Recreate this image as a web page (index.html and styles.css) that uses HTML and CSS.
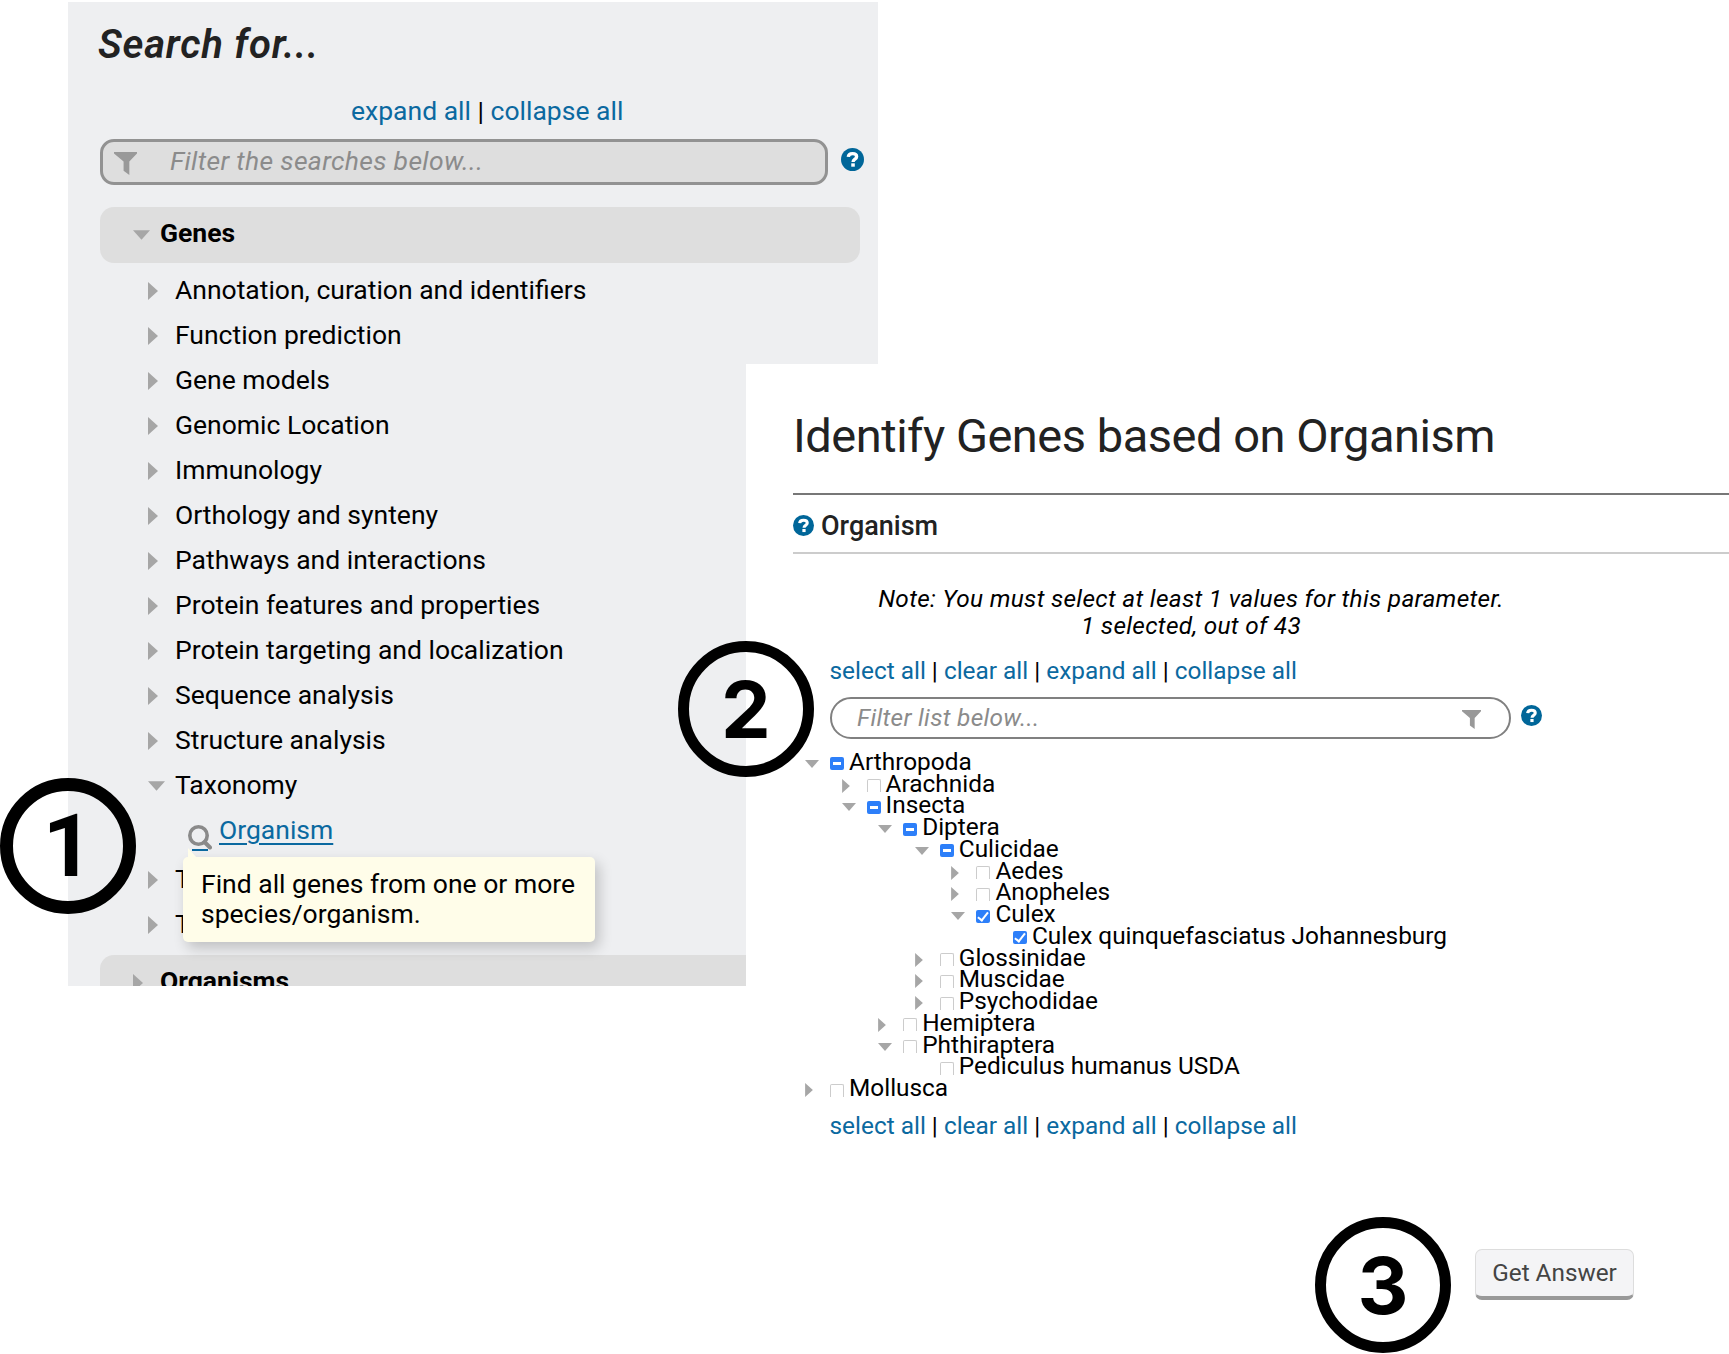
FILE: index.html
```html
<!DOCTYPE html>
<html lang="en">
<head>
<meta charset="utf-8">
<title>Identify Genes based on Organism</title>
<link rel="stylesheet" href="styles.css">
</head>
<body>
<svg class="defs" width="0" height="0">
  <symbol id="help" viewBox="0 0 24 24"><circle cx="12" cy="12" r="12" fill="#069"/><path d="M7.600 9.300C7.800 6.900 9.600 5.900 12 5.900s4.300 1.100 4.300 3.100c0 2.700-3.700 2.600-3.700 5.600" fill="none" stroke="#fff" stroke-width="3.500"/><rect x="10.700" y="16" width="3.700" height="3.500" fill="#fff"/></symbol>
  <symbol id="funnel" viewBox="0 0 24 24"><path d="M0 0h24v1.500l-8 8.500V24l-6-4.500V10L0 1.500z" fill="#999"/></symbol>
  <symbol id="right" viewBox="0 0 10 18"><path d="M0 0L10 9 0 18z" fill="#a6a6a6"/></symbol>
  <symbol id="down" viewBox="0 0 18 10"><path d="M0 0H18L9 10z" fill="#a6a6a6"/></symbol>
</svg>
<main class="stage">
  <aside class="searches">
    <h2 class="searches-title">Search for...</h2>
    <div class="links searches-links"><a>expand all</a> | <a>collapse all</a></div>
    <div class="filter-row">
      <div class="filter"><svg class="filter-icon"><use href="#funnel"/></svg><span>Filter the searches below...</span></div>
      <svg class="help-lg"><use href="#help"/></svg>
    </div>
    <div class="group"><svg class="arrow-down"><use href="#down"/></svg><span>Genes</span></div>
    <ul class="cats">
      <li><svg class="arrow"><use href="#right"/></svg><span>Annotation, curation and identifiers</span></li>
      <li><svg class="arrow"><use href="#right"/></svg><span>Function prediction</span></li>
      <li><svg class="arrow"><use href="#right"/></svg><span>Gene models</span></li>
      <li><svg class="arrow"><use href="#right"/></svg><span>Genomic Location</span></li>
      <li><svg class="arrow"><use href="#right"/></svg><span>Immunology</span></li>
      <li><svg class="arrow"><use href="#right"/></svg><span>Orthology and synteny</span></li>
      <li><svg class="arrow"><use href="#right"/></svg><span>Pathways and interactions</span></li>
      <li><svg class="arrow"><use href="#right"/></svg><span>Protein features and properties</span></li>
      <li><svg class="arrow"><use href="#right"/></svg><span>Protein targeting and localization</span></li>
      <li><svg class="arrow"><use href="#right"/></svg><span>Sequence analysis</span></li>
      <li><svg class="arrow"><use href="#right"/></svg><span>Structure analysis</span></li>
      <li><svg class="arrow-down"><use href="#down"/></svg><span>Taxonomy</span></li>
      <li class="leaf">
        <span class="magnifier"><svg viewBox="0 0 24 25"><circle cx="10.500" cy="10.500" r="8.700" fill="none" stroke="#8a8a8a" stroke-width="3.600"/><path d="M16.500 17l5.500 5.500" stroke="#8a8a8a" stroke-width="4" stroke-linecap="round"/></svg></span>
        <a class="leaf-link">Organism</a>
        <div class="tooltip">Find all genes from one or more species/organism.</div>
      </li>
      <li><svg class="arrow"><use href="#right"/></svg><span>Text</span></li>
      <li><svg class="arrow"><use href="#right"/></svg><span>Transcriptomics</span></li>
    </ul>
    <div class="group group-next"><svg class="arrow"><use href="#right"/></svg><span>Organisms</span></div>
  </aside>

  <section class="question">
    <h1 class="question-title">Identify Genes based on Organism</h1>
    <div class="param-head"><svg class="help"><use href="#help"/></svg><span>Organism</span></div>
    <p class="note">Note: You must select at least 1 values for this parameter.<br><span>1 selected, out of 43</span></p>
    <div class="links tree-links"><a>select all</a> | <a>clear all</a> | <a>expand all</a> | <a>collapse all</a></div>
    <div class="list-filter-row">
      <div class="list-filter"><span>Filter list below...</span><svg class="list-funnel"><use href="#funnel"/></svg></div>
      <svg class="help"><use href="#help"/></svg>
    </div>
    <ul class="tree">
      <li><div class="node open"><svg><use href="#down"/></svg><i class="box some"></i>Arthropoda</div>
        <ul>
          <li><div class="node"><svg><use href="#right"/></svg><i class="box"></i>Arachnida</div></li>
          <li><div class="node open"><svg><use href="#down"/></svg><i class="box some"></i>Insecta</div>
            <ul>
              <li><div class="node open"><svg><use href="#down"/></svg><i class="box some"></i>Diptera</div>
                <ul>
                  <li><div class="node open"><svg><use href="#down"/></svg><i class="box some"></i>Culicidae</div>
                    <ul>
                      <li><div class="node"><svg><use href="#right"/></svg><i class="box"></i>Aedes</div></li>
                      <li><div class="node"><svg><use href="#right"/></svg><i class="box"></i>Anopheles</div></li>
                      <li><div class="node open"><svg><use href="#down"/></svg><i class="box all"></i>Culex</div>
                        <ul><li><div class="node end"><i class="box all"></i>Culex quinquefasciatus Johannesburg</div></li></ul>
                      </li>
                    </ul>
                  </li>
                  <li><div class="node"><svg><use href="#right"/></svg><i class="box"></i>Glossinidae</div></li>
                  <li><div class="node"><svg><use href="#right"/></svg><i class="box"></i>Muscidae</div></li>
                  <li><div class="node"><svg><use href="#right"/></svg><i class="box"></i>Psychodidae</div></li>
                </ul>
              </li>
              <li><div class="node"><svg><use href="#right"/></svg><i class="box"></i>Hemiptera</div></li>
              <li><div class="node open"><svg><use href="#down"/></svg><i class="box"></i>Phthiraptera</div>
                <ul><li><div class="node end"><i class="box"></i>Pediculus humanus USDA</div></li></ul>
              </li>
            </ul>
          </li>
        </ul>
      </li>
      <li><div class="node"><svg><use href="#right"/></svg><i class="box"></i>Mollusca</div></li>
    </ul>
    <div class="links tree-links tree-links-end"><a>select all</a> | <a>clear all</a> | <a>expand all</a> | <a>collapse all</a></div>
    <button class="answer">Get Answer</button>
  </section>

  <div class="step step-one">1</div>
  <div class="step step-two">2</div>
  <div class="step step-three">3</div>
</main>
</body>
</html>
```
FILE: styles.css
```css
* { box-sizing: border-box; }
body { margin: 0; background: #fff; color: #000; font-family: Roboto, sans-serif; font-size: 26.5px; }
ul { list-style: none; margin: 0; padding: 0; }
svg { display: block; flex: none; }
.defs { position: absolute; }
.stage { position: relative; display: grid; width: 1729px; height: 1354px; overflow: hidden; }
.searches, .question { grid-area: 1 / 1; }
.links { white-space: pre; }
.links a { color: #0b69a0; }

/* search menu */
.searches { width: 810px; height: 984px; margin: 2px 0 0 68px; padding: 0 17px 0 32px; background: #eeeff1; overflow: hidden; }
.searches-title { margin: 18px 0 0 -2px; font-size: 40px; line-height: 50px; font-weight: 600; font-style: italic; letter-spacing: .8px; color: #222; }
.searches-links { margin: 26px 0 0 251px; line-height: 30px; }
.filter-row { display: flex; margin-top: 13px; }
.filter { display: flex; align-items: center; width: 728px; height: 46px; padding-left: 11px; border: 3px solid #929292; border-radius: 14px; background: #dedede; color: #8b8b8b; font-style: italic; letter-spacing: .33px; }
.filter span { margin: -4px 0 0 33px; }
.filter-icon { width: 23px; height: 23px; margin-top: 2px; }
.help-lg { width: 23px; height: 23px; margin: 9px 0 0 12px; }
.filter-row { width: 765px; }
.filter { width: 728px; }
.help-lg { margin-left: 13px; }
.group { display: flex; align-items: center; width: 760px; height: 56px; margin-top: 22px; padding-left: 33px; border-radius: 14px; background: #dedede; font-weight: 700; }
.group .arrow-down { margin-right: 10px; }
.group span { margin-top: -6px; }
.arrow { width: 10px; height: 18px; margin-right: 17px; }
.arrow-down { width: 17px; height: 10px; margin-right: 10px; }
.cats { padding: 4px 0 0 48px; }
.cats > li { display: flex; align-items: center; height: 45px; }
.cats svg.arrow, .cats svg.arrow-down { margin-top: 3px; }
.cats > .leaf { position: relative; height: 49px; padding-left: 40px; align-items: flex-start; }
.magnifier svg { width: 24px; height: 25px; margin-top: 18px; }
.magnifier::after { content: ""; display: block; width: 16px; height: 2px; margin: -1px 0 0 4px; background: #0b69a0; }
.leaf-link { margin: 8px 0 0 7px; line-height: 30px; color: #0b69a0; text-decoration: underline; text-decoration-thickness: 2px; text-underline-offset: 4px; }
.tooltip { position: absolute; z-index: 1; left: 35px; top: 50px; width: 412px; height: 85px; padding: 12px 18px; border-radius: 5px; background: #fffde9; box-shadow: 4px 6px 14px rgba(0, 0, 0, .2); line-height: 30px; }
.tooltip::before { content: ""; position: absolute; left: 5px; top: -9px; border-style: solid; border-width: 0 9px 10px 0; border-color: transparent transparent #fffde9; }
.group-next { margin-top: 9px; }

/* question form */
.question { width: 983px; height: 990px; margin: 364px 0 0 746px; padding-left: 47px; background: #fff; }
.question-title { margin: 44px 0 0; font-size: 47px; line-height: 56px; font-weight: 400; letter-spacing: -.48px; color: #222; }
.param-head { display: flex; align-items: center; height: 61px; margin-top: 29px; padding-top: 4px; border-top: 2px solid #777; border-bottom: 2px solid #ccc; font-size: 27px; font-weight: 500; color: #222; }
.param-head span { margin-left: 7px; }
.help { width: 21px; height: 21px; }
.note { width: 796px; margin: 31px 0 0; font-size: 24.4px; line-height: 27.3px; font-style: italic; letter-spacing: .31px; text-align: center; }
.tree-links { margin: 16px 0 0 36.5px; font-size: 24.4px; line-height: 30px; }
.list-filter-row { display: flex; margin: 11px 0 0 36.5px; }
.list-filter { display: flex; justify-content: space-between; width: 681px; height: 42px; padding: 0 28px 0 25.5px; border: 2px solid #808080; border-radius: 21px; color: #8b8b8b; font-size: 24.4px; line-height: 38px; font-style: italic; letter-spacing: .31px; }
.list-funnel { width: 19px; height: 19px; margin-top: 11px; }
.list-filter-row .help { margin: 8px 0 0 10px; }
.tree { margin: 12.3px 0 0 12px; font-size: 24.4px; }
.tree ul { padding-left: 36.6px; }
.node { display: flex; align-items: center; height: 21.75px; line-height: 21.75px; white-space: nowrap; }
.node svg { width: 8px; height: 14px; margin: 4px 17px 0 0; }
.node.open svg { width: 14px; height: 8px; margin-right: 11px; }
.node.end { padding-left: 25px; }
.box { flex: none; width: 14px; height: 13px; margin: 4px 5px 0 0; border: solid #ccc; border-width: 1.500px 1px 0; border-radius: 2px 2px 0 0; }
.box.some, .box.all { display: grid; place-items: center; border: 0; border-radius: 2px; background: #2d7ff9; }
.box.some::before { content: ""; width: 8px; height: 3px; background: #fff; }
.box.all::before { content: ""; width: 4px; height: 9px; margin-top: -2px; border: solid #fff; border-width: 0 2px 2px 0; transform: rotate(38deg); }
.tree-links-end { margin-top: 11.7px; }
.answer { display: block; width: 159px; height: 51px; margin: 108px 0 0 682px; padding: 0 0 1px; border: 1px solid #ddd; border-bottom: 4px solid #999; border-radius: 7px; background: #f4f4f6; color: #444; font: 24.3px Roboto, sans-serif; }

/* numbered callouts pinned over the panels */
.step { position: absolute; display: grid; place-items: center; width: 136px; height: 136px; border: 11px solid #000; border-radius: 50%; font: 700 79px/1 Inter, sans-serif; }
.step-one { left: 0; top: 778px; border-width: 13px; font: 700 88px/1 Roboto, sans-serif; }
.step-two { left: 678px; top: 641px; }
.step-three { left: 1315px; top: 1217px; }
```
